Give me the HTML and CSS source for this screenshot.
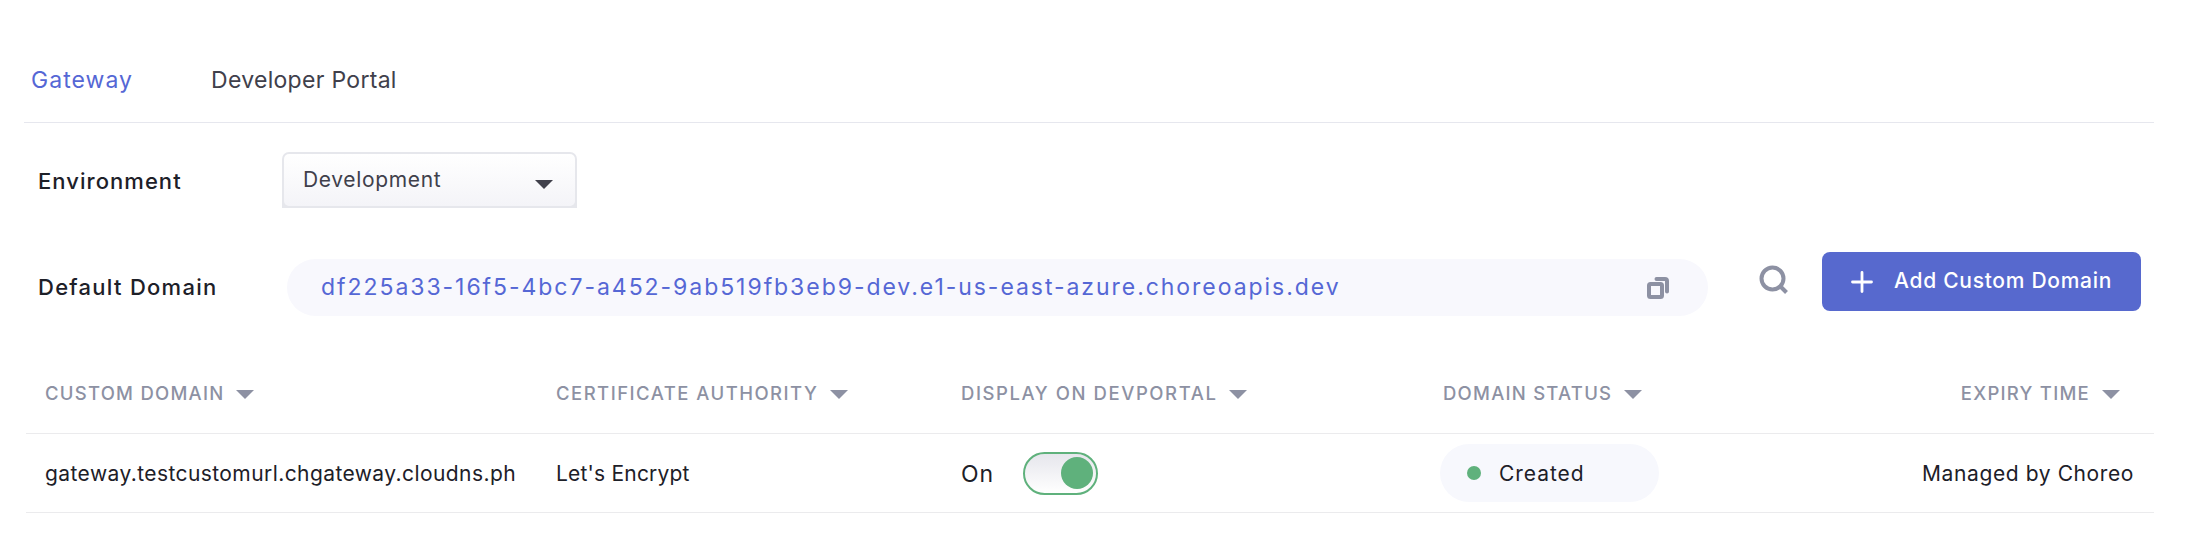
FILE: index.html
```html
<!DOCTYPE html>
<html lang="en">
<head>
<meta charset="utf-8">
<title>Custom domains</title>
<link rel="stylesheet" href="styles.css">
</head>
<body>
<nav class="tabs">
  <a class="tab tab-active">Gateway</a>
  <a class="tab tab-portal">Developer Portal</a>
</nav>
<section class="environment">
  <span class="label label-env">Environment</span>
  <div class="select"><div class="select-inner"><span class="select-value">Development</span><svg class="caret" viewBox="0 0 18 9"><path d="M0 0h18L9 9z"/></svg></div></div>
</section>
<section class="domain">
  <span class="label label-domain">Default Domain</span>
  <div class="url-pill">
    <span class="url">df225a33-16f5-4bc7-a452-9ab519fb3eb9-dev.e1-us-east-azure.choreoapis.dev</span>
    <svg class="copy" viewBox="0 0 22 22"><rect x="2" y="7" width="13" height="13" rx="1.5"/><path d="M9.500 2H18a2 2 0 0 1 2 2v10.500"/></svg>
  </div>
  <svg class="search" viewBox="0 0 30 30"><circle cx="13.500" cy="13.500" r="11"/><path d="M21.500 21.500l6 6"/></svg>
  <button class="add"><svg class="plus" viewBox="0 0 22 22"><path d="M11 1.500v19M1.500 11h19"/></svg><span class="add-text">Add Custom Domain</span></button>
</section>
<section class="table">
  <div class="row head">
    <div class="cell"><span class="heading">CUSTOM DOMAIN</span><svg class="caret" viewBox="0 0 18 9"><path d="M0 0h18L9 9z"/></svg></div>
    <div class="cell"><span class="heading heading-ca">CERTIFICATE AUTHORITY</span><svg class="caret" viewBox="0 0 18 9"><path d="M0 0h18L9 9z"/></svg></div>
    <div class="cell"><span class="heading heading-display">DISPLAY ON DEVPORTAL</span><svg class="caret" viewBox="0 0 18 9"><path d="M0 0h18L9 9z"/></svg></div>
    <div class="cell"><span class="heading">DOMAIN STATUS</span><svg class="caret" viewBox="0 0 18 9"><path d="M0 0h18L9 9z"/></svg></div>
    <div class="cell cell-end"><span class="heading">EXPIRY TIME</span><svg class="caret" viewBox="0 0 18 9"><path d="M0 0h18L9 9z"/></svg></div>
  </div>
  <div class="row body">
    <div class="cell"><span class="text host">gateway.testcustomurl.chgateway.cloudns.ph</span></div>
    <div class="cell"><span class="text issuer">Let's Encrypt</span></div>
    <div class="cell"><span class="text on">On</span><span class="toggle"><i class="knob"></i></span></div>
    <div class="cell"><span class="status"><i class="dot"></i><span class="text status-text">Created</span></span></div>
    <div class="cell cell-end"><span class="text expiry">Managed by Choreo</span></div>
  </div>
</section>
</body>
</html>
```
FILE: styles.css
```css
* { box-sizing: border-box; }
body {
  margin: 0;
  width: 2188px;
  height: 552px;
  background: #fff;
  color: #1d2028;
  font-family: Inter, "Liberation Sans", sans-serif;
  font-size: 21px;
  line-height: 30px;
  white-space: nowrap;
  overflow: hidden;
}
svg { display: block; flex: none; }
.tabs {
  display: flex;
  align-items: center;
  height: 83px;
  margin: 40px 34px 0 24px;
  padding: 0 0 2px 7px;
  border-bottom: 1px solid #e6e7ee;
}
.tab { font-size: 23px; color: #40404b; letter-spacing: 0.3px; }
.tab-active { width: 180px; color: #5567d5; letter-spacing: 1.05px; }
.environment { display: flex; align-items: center; height: 56px; margin: 29px 0 0 38px; }
.label { width: 244px; font-size: 22px; font-weight: 500; letter-spacing: 1.05px; }
.label-env { padding-top: 2px; }
.label-domain { width: 249px; padding-top: 11px; letter-spacing: 1.27px; }
.select {
  width: 295px;
  height: 56px;
  padding: 2px;
  border-radius: 7px 7px 0 0;
  background: #e6e7ec;
}
.select-inner {
  display: flex;
  align-items: center;
  justify-content: space-between;
  height: 52px;
  padding: 0 22px 0 19px;
  border-radius: 5px;
  background: linear-gradient(#fff, #f4f4f8);
  color: #40404b;
  letter-spacing: 0.65px;
}
.caret { width: 18px; height: 9px; fill: #8d91a3; }
.select .caret { margin-top: 8px; fill: #40404b; }
.domain { display: flex; align-items: center; height: 59px; margin: 44px 0 0 38px; }
.url-pill {
  display: flex;
  align-items: center;
  justify-content: space-between;
  width: 1421px;
  height: 57px;
  margin-top: 12px;
  padding: 0 39px 0 34px;
  border-radius: 29px;
  background: #f8f8fd;
}
.url { padding-bottom: 2px; font-size: 23px; color: #5567d5; letter-spacing: 1.95px; }
.copy { width: 22px; height: 22px; fill: none; stroke: #8d91a3; stroke-width: 4; stroke-linecap: round; }
.search { width: 30px; height: 30px; margin: 0 33px 3px 51px; fill: none; stroke: #8d91a3; stroke-width: 4; }
.add {
  display: flex;
  align-items: center;
  width: 319px;
  height: 59px;
  padding: 0 0 0 29px;
  border: 0;
  border-radius: 8px;
  background: #5769ce;
  color: #fff;
  font: 500 21px/30px Inter, "Liberation Sans", sans-serif;
  letter-spacing: 0.72px;
}
.add-text { padding-bottom: 2px; }
.plus { width: 22px; height: 22px; margin-right: 21px; stroke: #fff; stroke-width: 2.8; stroke-linecap: round; }
.table { margin: 44px 34px 0 26px; }
.row {
  display: grid;
  grid-template-columns: 511px 405px 482px 300px 1fr;
  padding-left: 19px;
  border-bottom: 1px solid #ebebed;
}
.cell { display: flex; align-items: center; }
.cell-end { justify-content: flex-end; padding-right: 20px; }
.head { height: 79px; color: #8d91a3; font-size: 18.5px; font-weight: 500; }
.heading { padding-bottom: 2px; letter-spacing: 1.24px; }
.heading-ca { letter-spacing: 1.47px; }
.heading-display { letter-spacing: 1.57px; }
.head .caret { margin-left: 12px; }
.head .cell-end { padding-right: 34px; }
.body { height: 79px; }
.text { padding-top: 2px; }
.host { letter-spacing: 0.42px; }
.issuer { letter-spacing: 0.2px; }
.on { width: 62px; font-size: 23px; letter-spacing: 1px; }
.status-text { letter-spacing: 0.95px; }
.expiry { letter-spacing: 0.6px; }
.toggle {
  display: flex;
  align-items: center;
  justify-content: flex-end;
  width: 75px;
  height: 43px;
  padding-right: 3px;
  border: 2px solid #5fb17c;
  border-radius: 22px;
  background: linear-gradient(#e6e6ec, #fff);
}
.knob { width: 32px; height: 32px; border-radius: 50%; background: #5fb17c; }
.status {
  display: flex;
  align-items: center;
  width: 219px;
  height: 58px;
  margin-left: -3px;
  padding-left: 27px;
  border-radius: 29px;
  background: #f7f8fd;
}
.dot { width: 14px; height: 14px; margin-right: 18px; border-radius: 50%; background: #5fb17c; }
```
